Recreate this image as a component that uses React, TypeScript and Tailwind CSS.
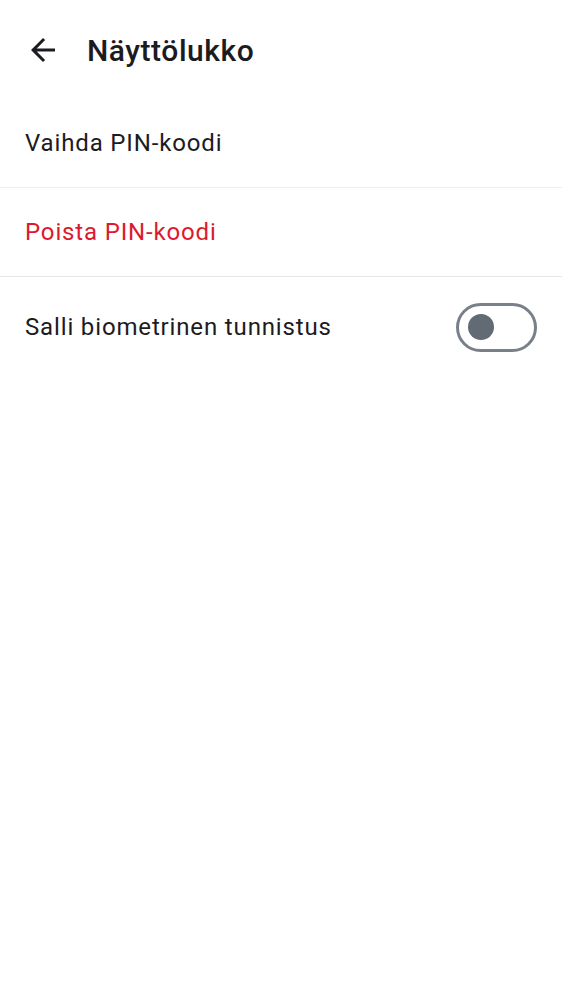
import React from "react";

export default function App() {
  return (
    <div className="w-[562px] h-[1000px] bg-white text-[#1c1b1f]" style={{ fontFamily: "Roboto, 'Noto Sans', sans-serif" }}>
      <div className="h-[100px] flex items-center pl-[25px]">
        <svg width="36" height="36" viewBox="0 0 24 24" className="shrink-0">
          <path d="M20 11H7.83l5.59-5.59L12 4l-8 8 8 8 1.41-1.41L7.83 13H20v-2z" fill="#1c1b1f" />
        </svg>
        <div className="ml-[26px] text-[30px] font-medium tracking-[0.55px]">Näyttölukko</div>
      </div>
      <div className="h-[88px] flex items-center px-[25px] pb-[2px] text-[24px] tracking-[0.85px] border-b border-[#eeeef0]">
        Vaihda PIN-koodi
      </div>
      <div className="h-[89px] flex items-center px-[25px] text-[24px] tracking-[0.85px] text-[#dc1a2e] border-b border-[#e4e6ec]">
        Poista PIN-koodi
      </div>
      <div className="h-[100px] flex items-center justify-between pl-[25px] pr-[25px]">
        <span className="text-[24px] tracking-[0.85px]">Salli biometrinen tunnistus</span>
        <div className="w-[81px] h-[49px] rounded-full border-[3px] border-[#79808a] flex items-center pl-[9px]">
          <div className="w-[26px] h-[26px] rounded-full bg-[#626a74]" />
        </div>
      </div>
    </div>
  );
}
